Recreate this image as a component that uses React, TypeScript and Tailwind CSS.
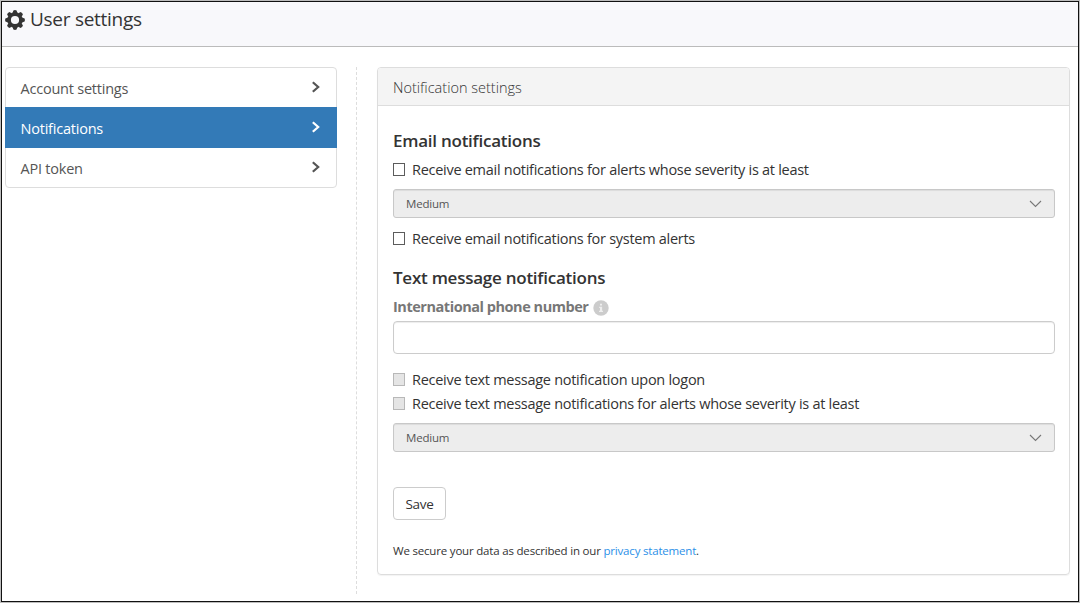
function Gear() {
  return (
    <svg width="20" height="20" viewBox="-10 -10 20 20" className="mt-0.5 mr-[5px] shrink-0" fill="currentColor">
      <circle r="5.9" fill="none" stroke="currentColor" strokeWidth="3.6" />
      {[0, 45, 90, 135, 180, 225, 270, 315].map((angle) => (
        <path key={angle} transform={`rotate(${angle})`} d="M-2.5 -7 L-1.6 -9.6 Q0 -10.2 1.6 -9.6 L2.5 -7 Z" />
      ))}
    </svg>
  );
}

function Chevron() {
  return (
    <svg width="9" height="12" viewBox="0 0 9 12" className="mr-[15px] mb-[3px] shrink-0" fill="none" stroke="currentColor" strokeWidth="2.2">
      <path d="M0.8 1.2 L6.2 6 L0.8 10.8" />
    </svg>
  );
}

function CheckRow({ label, disabled, className }: { label: string; disabled?: boolean; className: string }) {
  return (
    <label className={`flex h-5 items-center ${className}`}>
      <span
        className={`mr-[7px] h-[13px] w-3 shrink-0 border ${disabled ? "border-[#b8b8b8] bg-[#e5e5e5]" : "border-[#5c5c5c] bg-white"}`}
      />
      <span className="pt-0.5 whitespace-nowrap">{label}</span>
    </label>
  );
}

function SelectBox() {
  return (
    <div className="flex h-[29px] shrink-0 items-center justify-between rounded-[3px] border border-[#c8c8c8] bg-[#ededed] pr-3 pl-3 text-[11.5px] tracking-[-0.2px] text-[#555] shadow-[inset_0_1px_1px_rgba(0,0,0,0.075)]">
      <span>Medium</span>
      <svg width="13" height="8" viewBox="0 0 13 8" fill="none" stroke="#777" strokeWidth="1.1">
        <path d="M1 1 L6.5 6.5 L12 1" />
      </svg>
    </div>
  );
}

export default function App() {
  return (
    <div className="h-[603px] w-[1080px] border border-[#bdbdbd] bg-white font-['Open_Sans','Noto_Sans',sans-serif] text-[14.5px] tracking-[-0.28px] text-[#333]">
      <div className="flex h-full flex-col border border-[#111]">
        <header className="flex h-[45px] shrink-0 items-start border-b border-[#bbb] bg-[#f8f8fb] pt-[6px] pl-[3px]">
          <Gear />
          <h1 className="text-[19px] leading-[22px]">User settings</h1>
        </header>
        <div className="flex pt-5 pl-[3px]">
          <nav className="flex h-[121px] w-[332px] flex-col rounded border border-[#ddd] text-[#555]">
            <a className="flex h-[39px] items-center justify-between pt-0.5 pl-[14.5px] tracking-[-0.22px]">
              <span>Account settings</span>
              <Chevron />
            </a>
            <a className="-mx-px flex h-[41px] items-center justify-between bg-[#337ab7] pt-0.5 pr-px pl-[15.5px] tracking-[-0.22px] text-white">
              <span>Notifications</span>
              <Chevron />
            </a>
            <a className="flex h-[39px] items-center justify-between pt-0.5 pl-[14.5px] tracking-[-0.22px]">
              <span>API token</span>
              <Chevron />
            </a>
          </nav>
          <div className="ml-[19px] h-[527px] w-px border-l border-dashed border-[#ddd]" />
          <section className="ml-5 flex h-[508px] w-[693px] flex-col rounded border border-[#ddd] shadow-[0_1px_1px_rgba(0,0,0,0.05)]">
            <div className="flex h-[38px] shrink-0 items-center rounded-t-[3px] border-b border-[#ddd] bg-[#f4f4f4] pt-0.5 pl-[15px] font-light tracking-normal">
              Notification settings
            </div>
            <div className="flex flex-col pr-[14px] pl-[15px]">
              <h2 className="mt-6 h-[22px] text-[17px] leading-[22px] font-semibold tracking-[-0.25px]">Email notifications</h2>
              <CheckRow className="mt-[7px]" label="Receive email notifications for alerts whose severity is at least" />
              <div className="h-[10px]" />
              <SelectBox />
              <CheckRow className="mt-[10px]" label="Receive email notifications for system alerts" />
              <h2 className="mt-[19px] h-[22px] text-[17px] leading-[22px] font-semibold tracking-[-0.25px]">Text message notifications</h2>
              <div className="mt-[7px] flex h-5 items-center font-bold tracking-[-0.46px] text-[#777]">
                <span className="pt-0.5">International phone number</span>
                <svg width="16" height="16" viewBox="0 0 16 16" className="mt-1 ml-[5px]">
                  <circle cx="8" cy="8" r="7.7" fill="#ccc" />
                  <path d="M7 3.7h2v1.8H7zM6.2 6.8h2.9v4h.9v1.2H6v-1.2h1V8h-.8z" fill="#eee" />
                </svg>
              </div>
              <div className="mt-[5px] h-[33px] rounded border border-[#ccc] bg-white shadow-[inset_0_1px_1px_rgba(0,0,0,0.075)]" />
              <CheckRow disabled className="mt-[15px]" label="Receive text message notification upon logon" />
              <CheckRow disabled className="mt-1" label="Receive text message notifications for alerts whose severity is at least" />
              <div className="h-[10px]" />
              <SelectBox />
              <button className="mt-[35px] h-[33px] w-[53px] rounded border border-[#ccc] bg-white pt-0.5 text-[13.5px]">Save</button>
              <p className="mt-[21px] h-5 text-[11.5px] leading-5 tracking-[-0.19px]">
                We secure your data as described in our <a className="text-[#2b90e8]">privacy statement</a>.
              </p>
            </div>
          </section>
        </div>
      </div>
    </div>
  );
}
